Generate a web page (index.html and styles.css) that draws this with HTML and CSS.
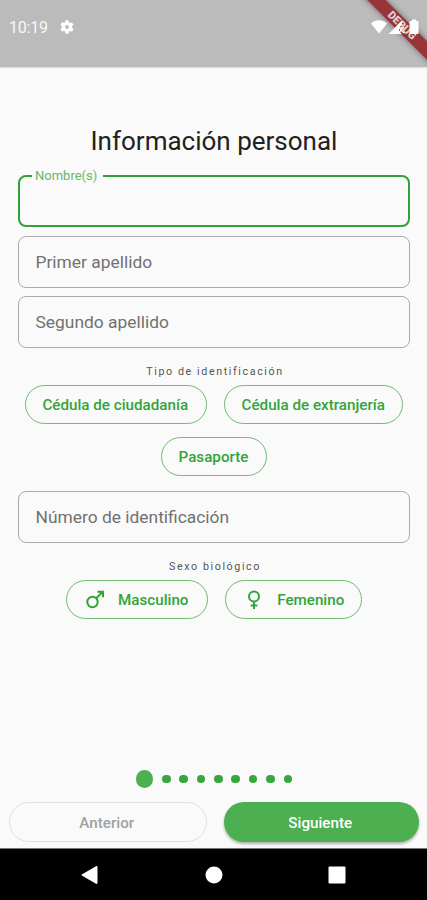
FILE: index.html
```html
<!DOCTYPE html>
<html lang="es">
<head>
    <meta charset="UTF-8">
    <meta name="viewport" content="width=device-width, initial-scale=1.0">
    <title>Información personal</title>
    <link rel="stylesheet" href="styles.css">
</head>
<body>
    <div class="screen">
        <header class="status-bar">
            <span class="clock">10:19</span>
            <svg class="gear" viewBox="0 0 24 24"><path d="M19.4 13c0-.3.1-.6.1-1s0-.7-.1-1l2.1-1.6c.2-.2.3-.4.1-.7l-2-3.4c-.1-.2-.4-.3-.6-.2l-2.5 1c-.5-.4-1.1-.7-1.7-1l-.4-2.6c0-.3-.2-.5-.5-.5h-4c-.2 0-.4.2-.5.4l-.4 2.7c-.6.2-1.2.6-1.7 1l-2.5-1c-.2-.1-.5 0-.6.2l-2 3.4c-.1.3 0 .5.1.7L4.5 11c0 .3-.1.7-.1 1s0 .7.1 1l-2.1 1.6c-.2.2-.3.4-.1.7l2 3.4c.1.2.4.3.6.2l2.5-1c.5.4 1.1.7 1.7 1l.4 2.6c0 .3.2.5.5.5h4c.2 0 .4-.2.5-.4l.4-2.7c.6-.2 1.2-.6 1.7-1l2.5 1c.2.1.5 0 .6-.2l2-3.4c.1-.3 0-.5-.1-.7zM12 15a3 3 0 1 1 0-6 3 3 0 0 1 0 6z"/></svg>
            <div class="debug-banner">DEBUG</div>
            <svg class="signals" viewBox="0 0 50 16">
                <path d="M0 4.500C4.500.3 11.500.3 16 4.500L8 14.500z"/>
                <path d="M17.500 15L31 1.500v4.500l-3 2v4l3 3z"/>
                <path d="M27.500 8l5.500 6m0-6l-5.500 6" class="no-signal"/>
                <path d="M39.500 2H41V.5h4V2h1.500c.6 0 1 .4 1 1v11c0 .6-.4 1-1 1h-7c-.6 0-1-.4-1-1V3c0-.6.4-1 1-1z"/>
            </svg>
        </header>

        <main class="form">
            <h1 class="title">Información personal</h1>
            <div class="field active"><label class="floating">Nombre(s)</label></div>
            <div class="field"><label class="name-label">Primer apellido</label></div>
            <div class="field"><label class="surname-label">Segundo apellido</label></div>

            <p class="overline">Tipo de identificación</p>
            <div class="chips">
                <button class="chip citizen">Cédula de ciudadanía</button>
                <button class="chip foreign">Cédula de extranjería</button>
                <button class="chip passport">Pasaporte</button>
            </div>

            <div class="field"><label class="number-label">Número de identificación</label></div>

            <p class="overline">Sexo biológico</p>
            <div class="chips">
                <button class="chip male">
                    <svg class="sex-icon" viewBox="0 0 20 20"><circle cx="7.500" cy="12" r="5.200"/><path d="M11.200 8.300L17.500 2M12.500 1.800h5.500v5.500"/></svg>
                    Masculino
                </button>
                <button class="chip female">
                    <svg class="sex-icon" viewBox="0 0 20 20"><circle cx="10" cy="6.500" r="5"/><path d="M10 11.500V19M6.700 15.400h6.600"/></svg>
                    Femenino
                </button>
            </div>
        </main>

        <footer class="footer">
            <div class="dots">
                <i class="dot current"></i>
                <i class="dot"></i>
                <i class="dot"></i>
                <i class="dot"></i>
                <i class="dot"></i>
                <i class="dot"></i>
                <i class="dot"></i>
                <i class="dot"></i>
                <i class="dot"></i>
            </div>
            <div class="actions">
                <button class="action previous">Anterior</button>
                <button class="action next">Siguiente</button>
            </div>
        </footer>

        <nav class="nav-bar">
            <svg viewBox="0 0 20 20"><path d="M2.200 9.200L16 1.200c.8-.4 1.500 0 1.500.8v16c0 .8-.7 1.200-1.500.8l-13.800-8c-.7-.4-.7-1.200 0-1.600z"/></svg>
            <svg viewBox="0 0 20 20"><circle cx="10" cy="10" r="8.500"/></svg>
            <svg viewBox="0 0 20 20"><rect x="1.500" y="1.500" width="17" height="17" rx="1"/></svg>
        </nav>
    </div>
</body>
</html>
```
FILE: styles.css
```css
* {
    box-sizing: border-box;
}

body {
    margin: 0;
    background: #fafafa;
    font-family: Roboto, sans-serif;
    color: #212121;
}

.screen {
    display: flex;
    flex-direction: column;
    width: 427px;
    height: 900px;
    overflow: hidden;
}

/* Status bar */
.status-bar {
    position: relative;
    display: flex;
    align-items: flex-start;
    height: 67px;
    padding: 19px 6px 0 9px;
    background: #bbb;
    box-shadow: 0 1px 1px #ddd;
    overflow: hidden;
}

.clock {
    width: 50px;
    font-size: 16px;
    line-height: 18px;
    letter-spacing: -0.2px;
    color: #f8f8f8;
}

.gear {
    width: 16px;
    height: 16px;
    fill: #fff;
}

.signals {
    position: relative;
    width: 50px;
    height: 16px;
    margin-left: auto;
    fill: #fff;
}

.no-signal {
    fill: none;
    stroke: #fff;
    stroke-width: 1.3;
}

.debug-banner {
    position: absolute;
    top: 19px;
    right: -30px;
    width: 110px;
    height: 13px;
    background: #983539;
    box-shadow: 0 0 6px rgba(0, 0, 0, 0.45);
    color: #e0d0d0;
    font-size: 11px;
    font-weight: 900;
    line-height: 13px;
    text-align: center;
    transform: rotate(45deg);
}

/* Form */
.form {
    flex: 1;
    padding: 57px 17px 0 18px;
}

.title {
    margin: 0 0 17px;
    font-size: 26px;
    font-weight: 400;
    line-height: 34px;
    text-align: center;
}

.field {
    position: relative;
    display: flex;
    align-items: center;
    height: 52px;
    margin-bottom: 8.7px;
    padding-left: 16.5px;
    border: 1px solid #aaa;
    border-radius: 8px;
    color: #717171;
    font-size: 17.4px;
}

.field.active {
    border: 2px solid #32a238;
}

.floating {
    position: absolute;
    top: -9px;
    left: 12px;
    padding: 0 6px 0 3px;
    background: #fafafa;
    color: #66b76a;
    font-size: 13px;
    line-height: 16px;
}

.overline {
    margin: 17px 0 6px;
    color: #555;
    font-size: 10.7px;
    line-height: 14px;
    letter-spacing: 1.6px;
    text-indent: 2px;
    text-align: center;
}

.chips {
    display: flex;
    flex-wrap: wrap;
    justify-content: center;
    gap: 13px 17.5px;
    margin-bottom: 15px;
}

.chip {
    display: flex;
    align-items: center;
    justify-content: center;
    height: 39px;
    padding: 0 1px 0 0;
    border: 1px solid #70bc73;
    border-radius: 20px;
    background: none;
    color: #34a43a;
    font: 500 15.2px Roboto, sans-serif;
    white-space: nowrap;
}

.citizen {
    width: 182px;
}

.foreign {
    width: 179px;
}

.passport {
    width: 106px;
}

.male {
    width: 142px;
    padding: 0;
}

.female {
    width: 137px;
    padding: 0 0 0 1px;
}

.sex-icon {
    width: 20px;
    height: 20px;
    margin-right: 13px;
    fill: none;
    stroke: #34a43a;
    stroke-width: 2;
}

/* Progress and buttons */
.dots {
    display: flex;
    align-items: center;
    justify-content: center;
    gap: 8.7px;
    height: 18px;
    margin: 0 0 14px;
    padding-left: 1px;
}

.dot {
    width: 8.7px;
    height: 8.7px;
    border-radius: 50%;
    background: #36a73d;
}

.dot.current {
    width: 17.4px;
    height: 17.4px;
    background: #4caf50;
}

.actions {
    display: flex;
    gap: 17px;
    padding: 0 8px 6px 9px;
}

.action {
    flex: 1;
    height: 40px;
    padding: 1px 2px 0 0;
    border: 1px solid #e0e0e0;
    border-radius: 20px;
    background: none;
    color: #a1a1a1;
    font: 500 15.2px Roboto, sans-serif;
}

.action.next {
    border: none;
    background: #4caf50;
    box-shadow: 0 2px 3px rgba(0, 0, 0, 0.3);
    color: #fff;
}

/* System navigation */
.nav-bar {
    display: flex;
    align-items: center;
    justify-content: space-between;
    height: 52px;
    padding: 0 80px;
    border-top: 1px solid #777;
    background: #000;
}

.nav-bar svg {
    width: 20px;
    height: 20px;
    fill: #fff;
}
```
